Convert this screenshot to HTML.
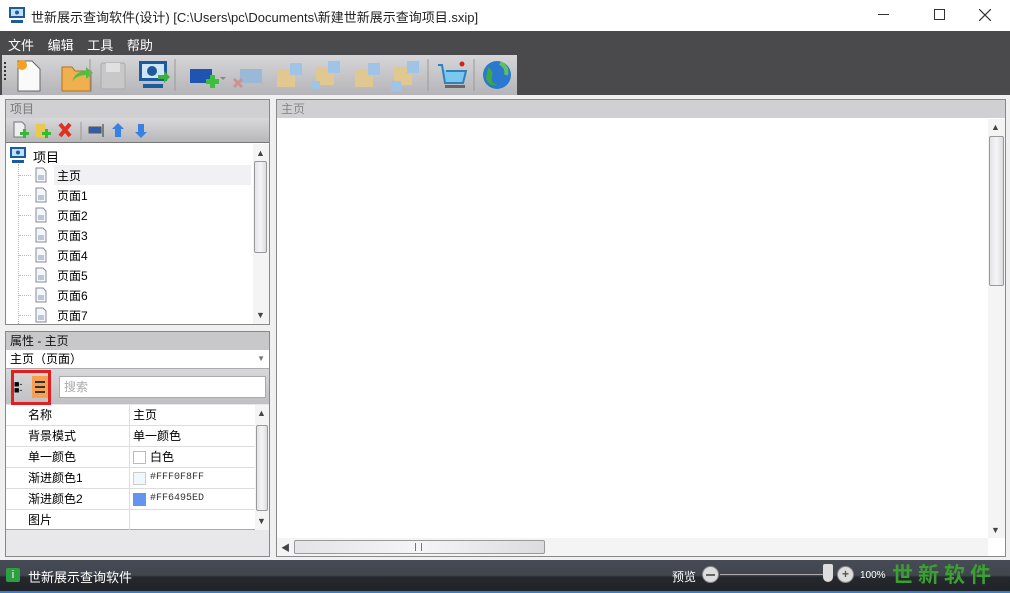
<!DOCTYPE html>
<html><head><meta charset="utf-8"><style>
*{margin:0;padding:0;box-sizing:border-box}
body{width:1010px;height:593px;overflow:hidden;background:#f0f0f0;font-family:"Liberation Sans","Noto Sans CJK SC",sans-serif;font-size:12px;color:#000;position:relative}
.a{position:absolute}
.hdr{background:#d0cfd1;color:#777;padding-left:4px;line-height:18px;font-size:12px}
.sb{background:linear-gradient(90deg,#e4e4e6,#f5f5f7,#dcdcde);border:1px solid #999;border-radius:2px}
.row{position:absolute;left:0;width:249px;height:21px;border-bottom:1px solid #ddd;line-height:20px}
.row span{position:absolute}
</style></head><body>
<div class="a" style="left:0;top:0;width:1010px;height:31px;background:#fff"></div>
<svg class="a" style="left:8px;top:6px" width="18" height="18"><rect x="1" y="1" width="16" height="11" fill="#1d5c9c"/><rect x="3" y="3" width="12" height="7" fill="#bfe0f8"/><circle cx="9" cy="6.5" r="2" fill="#1d5c9c"/><rect x="3" y="14" width="12" height="3" fill="#1d5c9c"/></svg>
<div class="a" style="left:31px;top:7px;font-size:13px;color:#222">世新展示查询软件(设计) [C:\Users\pc\Documents\新建世新展示查询项目.sxip]</div>
<div class="a" style="left:878px;top:14px;width:11px;height:1px;background:#333"></div>
<div class="a" style="left:934px;top:9px;width:11px;height:11px;border:1px solid #333"></div>
<svg class="a" style="left:979px;top:9px" width="12" height="12"><path d="M0 0L12 12M12 0L0 12" stroke="#333" stroke-width="1.2"/></svg>
<div class="a" style="left:0;top:31px;width:1010px;height:64px;background:#4a4a4d"></div>
<div class="a" style="left:8px;top:35px;color:#fff;font-size:13px;word-spacing:10px">文件 编辑 工具 帮助</div>
<div class="a" style="left:2px;top:55px;width:515px;height:40px;background:linear-gradient(#d6d6d8,#b5b5b9)"></div>
<div class="a" style="left:4px;top:62px;width:2px;height:18px;border-left:2px dotted #333"></div>
<svg class="a" style="left:10px;top:57px" width="510" height="36">
<path d="M8 4h14l8 8v22H8z" fill="#fafafa" stroke="#666"/><circle cx="12" cy="8" r="5" fill="#f5a020"/>
<path d="M52 10h10l3 4h16v20H52z" fill="#f0b050" stroke="#b07020"/><path d="M62 24q4-10 14-10v-4l7 6-7 6v-4q-8 0-14 6z" fill="#4fbf3f"/>
<rect x="91" y="6" width="24" height="26" rx="2" fill="#c8c8c8" stroke="#aaa"/><rect x="96" y="6" width="14" height="9" fill="#e0e0e0"/>
<rect x="129" y="4" width="28" height="20" fill="#1d5c9c"/><rect x="132" y="7" width="22" height="14" fill="#cfe6f8"/><circle cx="142" cy="14" r="5" fill="#1d5c9c"/><rect x="133" y="27" width="20" height="4" fill="#1d5c9c"/><path d="M148 18h6v-4l6 6-6 6v-4h-6z" fill="#3cb040"/>
<rect x="180" y="12" width="22" height="14" fill="#1f55b0"/><path d="M196 22h4v-4h5v4h4v5h-4v4h-5v-4h-4z" fill="#3cc03c"/><path d="M210 20l3 3 3-3z" fill="#888"/>
<rect x="230" y="12" width="22" height="14" fill="#9ab8d8"/><path d="M224 22l8 8m0-8l-8 8" stroke="#d09090" stroke-width="3"/>
<rect x="267" y="12" width="18" height="18" fill="#e0c890"/><rect x="280" y="6" width="12" height="12" fill="#a0c4e8"/>
<rect x="306" y="10" width="18" height="18" fill="#e0c890"/><rect x="318" y="4" width="12" height="12" fill="#a0c4e8"/><rect x="302" y="24" width="8" height="8" fill="#a0c4e8"/>
<rect x="345" y="12" width="18" height="18" fill="#e0c890"/><rect x="358" y="6" width="12" height="12" fill="#a0c4e8"/>
<rect x="384" y="10" width="18" height="18" fill="#e0c890"/><rect x="397" y="4" width="12" height="12" fill="#a0c4e8"/><rect x="381" y="24" width="10" height="10" fill="#a0c4e8"/>
<path d="M428 8l4 0 3 18h18l3-12H436" fill="#7ac8ee" stroke="#3080c0" stroke-width="2"/><circle cx="452" cy="7" r="2.5" fill="#d02020"/><rect x="435" y="28" width="20" height="3" fill="#666"/>
<circle cx="487" cy="18" r="14" fill="#2a78d0"/><path d="M478 10q6 4 4 10t6 8q-8 2-12-6z" fill="#3caa3c"/><path d="M490 6q8 4 6 12" fill="none" stroke="#60c060" stroke-width="4"/>
<line x1="80" y1="2" x2="80" y2="34" stroke="#999"/><line x1="165" y1="2" x2="165" y2="34" stroke="#999"/><line x1="418" y1="2" x2="418" y2="34" stroke="#999"/><line x1="464" y1="2" x2="464" y2="34" stroke="#999"/>
</svg>
<div class="a" style="left:5px;top:99px;width:265px;height:226px;border:1px solid #888;background:#fff">
 <div class="hdr">项目</div>
 <div style="height:25px;background:linear-gradient(#d8d8da,#b8b8bc);border-bottom:1px solid #777;position:relative">
  <svg width="150" height="22" style="position:absolute;left:6px;top:2px"><path d="M2 2h8l3 3v12H2z" fill="#eee" stroke="#777"/><path d="M8 12h3v-3h3v3h3v3h-3v3h-3v-3H8z" fill="#3b3"/><path d="M24 4h9v13h-9z" fill="#e8c850"/><path d="M30 12h3v-3h3v3h3v3h-3v3h-3v-3h-3z" fill="#3b3"/><path d="M48 4l10 12m0-12L48 16" stroke="#e03020" stroke-width="4"/><line x1="69" y1="2" x2="69" y2="20" stroke="#999"/><rect x="77" y="7" width="12" height="6" fill="#2a60b0" stroke="#555"/><path d="M91 4v13" stroke="#333"/><path d="M106 3l6 6h-3v8h-6V9h-3z" fill="#3a80e0"/><path d="M129 18l6-6h-3V4h-6v8h-3z" fill="#3a80e0"/></svg>
 </div>
</div>
<div class="a" style="left:6px;top:144px;width:247px;height:180px;overflow:hidden;background:#fff">
<svg class="a" style="left:3px;top:2px" width="20" height="18"><rect x="1" y="1" width="16" height="11" fill="#1d5c9c"/><rect x="3" y="3" width="12" height="7" fill="#bfe0f8"/><circle cx="9" cy="6.5" r="2" fill="#1d5c9c"/><rect x="3" y="14" width="12" height="3" fill="#1d5c9c"/></svg>
<div class="a" style="left:27px;top:3px;font-size:13px">项目</div>
<div class="a" style="left:48px;top:21px;width:197px;height:20px;background:#f1f1f4"></div>
<div class="a" style="left:12px;top:20px;width:1px;height:170px;border-left:1px dotted #bbb"></div>
<div id="tree"></div>
</div>
<div class="a" style="left:253px;top:144px;width:16px;height:180px;background:#f4f4f4"></div>
<div class="a" style="left:256px;top:148px;font-size:9px;color:#444">▲</div>
<div class="a sb" style="left:254px;top:161px;width:13px;height:92px"></div>
<div class="a" style="left:256px;top:310px;font-size:9px;color:#444">▼</div>
<div class="a" style="left:5px;top:331px;width:265px;height:226px;border:1px solid #888;background:#e8e8ea">
 <div class="hdr" style="color:#111;background:#c8c7c9">属性 - 主页</div>
 <div style="height:19px;background:#fff;border-bottom:1px solid #aaa;padding-left:4px;line-height:18px">主页（页面）<span style="float:right;color:#777;font-size:8px;margin-right:4px">▼</span></div>
 <div style="height:35px;background:linear-gradient(#d8d8da,#c0c0c4);position:relative">
  <div class="a" style="left:26px;top:7px;width:16px;height:22px;background:#f8a050"></div>
  <div class="a" style="left:29px;top:12px;width:10px;height:12px;border-top:2px solid #333;border-bottom:2px solid #333"><div style="margin-top:3px;height:2px;background:#333"></div></div>
  <div class="a" style="left:8px;top:12px;font-size:9px;line-height:6px">■-<br>■-</div>
  <div class="a" style="left:5px;top:1px;width:40px;height:35px;border:3px solid #e02020"></div>
  <div class="a" style="left:53px;top:7px;width:207px;height:22px;background:#fff;border:1px solid #aaa;color:#aaa;padding-left:4px;line-height:20px">搜索</div>
 </div>
 <div style="position:absolute;left:0;top:73px;width:263px;height:125px;background:#fff;border-bottom:1px solid #aaa">
  <div class="a" style="left:123px;top:0;width:1px;height:125px;background:#ddd"></div>
  <div class="row" style="top:0"><span style="left:22px">名称</span><span style="left:127px">主页</span></div>
  <div class="row" style="top:21px"><span style="left:22px">背景模式</span><span style="left:127px">单一颜色</span></div>
  <div class="row" style="top:42px"><span style="left:22px">单一颜色</span><span style="left:127px;top:4px;width:13px;height:13px;border:1px solid #bbb;background:#fff"></span><span style="left:144px">白色</span></div>
  <div class="row" style="top:63px"><span style="left:22px">渐进颜色1</span><span style="left:127px;top:4px;width:13px;height:13px;border:1px solid #ccc;background:#f0f8ff"></span><span style="left:144px;font-family:'Liberation Mono',monospace;font-size:10px;color:#333">#FFF0F8FF</span></div>
  <div class="row" style="top:84px"><span style="left:22px">渐进颜色2</span><span style="left:127px;top:4px;width:13px;height:13px;background:#6495ed"></span><span style="left:144px;font-family:'Liberation Mono',monospace;font-size:10px;color:#333">#FF6495ED</span></div>
  <div class="row" style="top:105px;border:0"><span style="left:22px">图片</span></div>
  <div class="a" style="left:249px;top:0;width:14px;height:125px;background:#f4f4f4"></div>
  <div class="a" style="left:251px;top:3px;font-size:9px;color:#444">▲</div>
  <div class="a sb" style="left:250px;top:20px;width:12px;height:86px"></div>
  <div class="a" style="left:251px;top:111px;font-size:9px;color:#444">▼</div>
 </div>
</div>
<div class="a" style="left:276px;top:99px;width:730px;height:458px;border:1px solid #888;background:#fff">
 <div class="hdr" style="background:#d0cfd1;color:#888">主页</div>
</div>
<div class="a" style="left:988px;top:119px;width:17px;height:419px;background:#f4f4f4"></div>
<div class="a" style="left:991px;top:122px;font-size:9px;color:#444">▲</div>
<div class="a sb" style="left:989px;top:136px;width:15px;height:150px"></div>
<div class="a" style="left:991px;top:525px;font-size:9px;color:#444">▼</div>
<div class="a" style="left:277px;top:538px;width:711px;height:18px;background:#f4f4f4"></div>
<div class="a" style="left:281px;top:541px;font-size:9px;color:#444">◀</div>
<div class="a sb" style="left:294px;top:540px;width:251px;height:14px"></div>
<div class="a" style="left:415px;top:543px;width:7px;height:8px;border-left:1px solid #777;border-right:1px solid #777"></div>
<div class="a" style="left:0;top:560px;width:1010px;height:33px;background:linear-gradient(#464b55 0,#40454e 50%,#25282e 55%,#202328 100%);border-bottom:2px solid #3a7ec8"></div>
<div class="a" style="left:6px;top:568px;width:14px;height:14px;background:#2ca040;border-radius:2px;color:#fff;font-size:11px;text-align:center;line-height:14px">i</div>
<div class="a" style="left:28px;top:567px;color:#fff;font-size:13px">世新展示查询软件</div>
<div class="a" style="left:672px;top:568px;color:#fff;font-size:12px">预览</div>
<div class="a" style="left:702px;top:566px;width:17px;height:17px;border-radius:50%;background:#ddd;border:1px solid #888"><div style="margin:7px 3px;height:2px;background:#666"></div></div>
<div class="a" style="left:720px;top:574px;width:110px;height:1px;background:#aaa"></div>
<div class="a" style="left:823px;top:564px;width:10px;height:18px;background:#ddd;border-radius:2px 2px 5px 5px"></div>
<div class="a" style="left:837px;top:566px;width:17px;height:17px;border-radius:50%;background:#ddd;border:1px solid #888;color:#555;text-align:center;line-height:15px;font-weight:bold">+</div>
<div class="a" style="left:860px;top:570px;color:#fff;font-size:10px">100%</div>
<div class="a" style="left:892px;top:563px;color:#3aa030;font-size:21px;font-weight:bold;letter-spacing:5px;line-height:26px;white-space:nowrap">世新软件</div>
<script>
var t=document.getElementById('tree'),n=['主页','页面1','页面2','页面3','页面4','页面5','页面6','页面7'];
n.forEach(function(s,i){var y=21+i*20;t.innerHTML+='<div class="a" style="left:13px;top:'+(y+10)+'px;width:12px;border-top:1px dotted #bbb"></div><svg class="a" style="left:29px;top:'+(y+2)+'px" width="12" height="16"><path d="M1 1h7l3 3v11H1z" fill="#f4f6fa" stroke="#889"/><rect x="3" y="8" width="6" height="5" fill="#bcc6d8"/></svg><div class="a" style="left:51px;top:'+(y+2)+'px">'+s+'</div>';});
</script>
</body></html>
